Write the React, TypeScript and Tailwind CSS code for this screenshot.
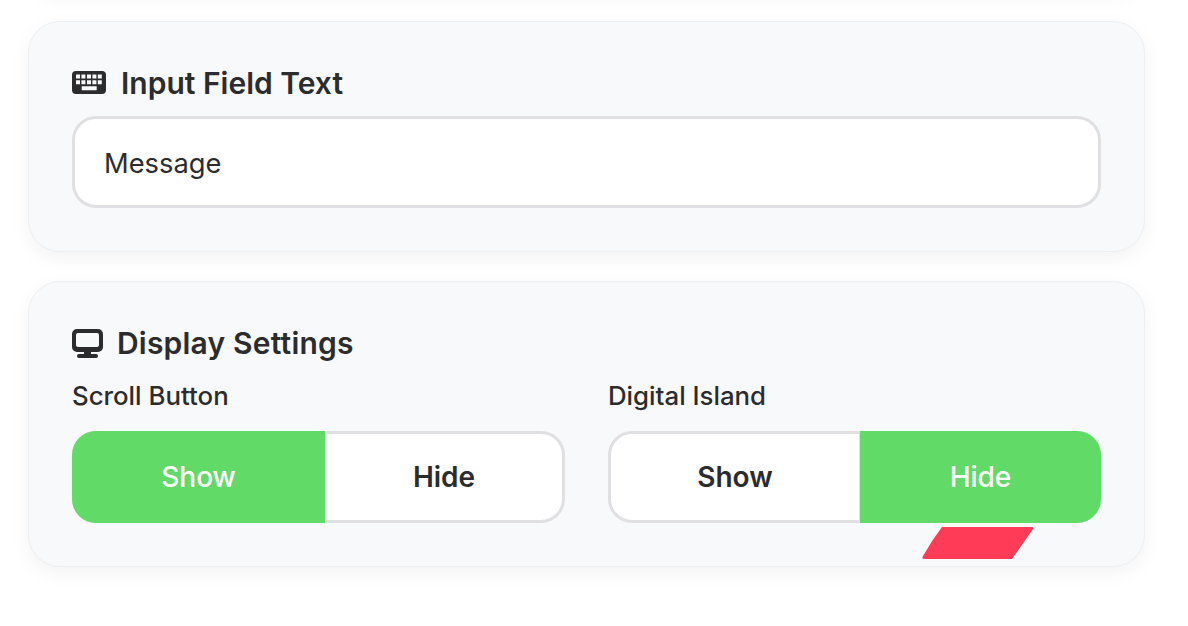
function KeyboardIcon() {
    return (
        <svg className="mr-[15px] -mt-[1px]" width="34" height="23" viewBox="0 0 34 23">
            <path
                fillRule="evenodd"
                fill="#2c2c2e"
                d="M4 0H30A4 4 0 0 1 34 4V19A4 4 0 0 1 30 23H4A4 4 0 0 1 0 19V4A4 4 0 0 1 4 0ZM4 3.5V7.5H8V3.5ZM9.4 3.5V7.5H13.4V3.5ZM15 3.5V7.5H19V3.5ZM20.4 3.5V7.5H24.4V3.5ZM25.8 3.5V7.5H29.8V3.5ZM4 9.3V13.3H8V9.3ZM9.4 9.3V13.3H13.4V9.3ZM15 9.3V13.3H19V9.3ZM20.4 9.3V13.3H24.4V9.3ZM25.8 9.3V13.3H29.8V9.3ZM9.7 15.2V19.2H24.7V15.2Z"
            />
        </svg>
    );
}

function DesktopIcon() {
    return (
        <svg className="mr-[14px]" width="31" height="29" viewBox="0 0 31 29">
            <path
                fillRule="evenodd"
                fill="#2c2c2e"
                d="M5 0H26A5 5 0 0 1 31 5V18A5 5 0 0 1 26 23H19V25H24A2 2 0 0 1 24 29H7A2 2 0 0 1 7 25H12V23H5A5 5 0 0 1 0 18V5A5 5 0 0 1 5 0ZM6 4A2 2 0 0 0 4 6V16A2 2 0 0 0 6 18H25A2 2 0 0 0 27 16V6A2 2 0 0 0 25 4Z"
            />
        </svg>
    );
}

function Segmented({ label, active, withMarker }: { label: string; active: 'Show' | 'Hide'; withMarker?: boolean }) {
    return (
        <div className="flex-1 min-w-0">
            <div className="text-[25.8px] leading-[30px] font-medium text-[#2c2c2e] mb-[20px]">{label}</div>
            <div className="relative flex h-[92px] rounded-[24px] bg-white border-[3px] border-[#e0e0e2]">
                {active === 'Show' ? (
                    <>
                        <div className="flex-none w-[254px] -ml-[3px] -my-[3px] flex items-center justify-center rounded-l-[24px] border-r border-[#d5e6d6] bg-[#62da68] text-white text-[28px] font-medium">
                            Show
                        </div>
                        <div className="flex-1 flex items-center justify-center text-[28px] font-semibold">Hide</div>
                    </>
                ) : (
                    <>
                        <div className="flex-none w-[248px] flex items-center justify-center text-[28px] font-semibold">Show</div>
                        <div className="flex-1 -mr-[3px] -my-[3px] flex items-center justify-center rounded-r-[24px] border-l border-[#d5e6d6] bg-[#62da68] text-white text-[28px] font-medium">
                            Hide
                        </div>
                    </>
                )}
                {withMarker && (
                    <svg className="absolute left-[309px] top-[92px] blur-[0.5px]" width="114" height="35" viewBox="0 0 114 35">
                        <path d="M22 1 L112 1 Q114 1 113 3 L92 33 L5 33 Q1 33 3 30 Q12 14 22 1 Z" fill="#ff3b58" />
                    </svg>
                )}
            </div>
        </div>
    );
}

export default function App() {
    return (
        <div className="w-[1188px] h-[626px] overflow-hidden bg-white px-[28px] font-['Inter',sans-serif] text-[#2c2c2e]">
            <div className="-mt-[200px] w-[1117px] h-[191px] bg-[#f8f9fb] rounded-[32px] shadow-[0_6px_20px_rgba(0,0,0,0.05)]" />

            <div className="mt-[30px] w-[1117px] h-[231px] bg-[#f8f9fb] border border-[#eeeff1] rounded-[32px] shadow-[0_6px_20px_rgba(0,0,0,0.05)] px-[43px] pt-[43px]">
                <h2 className="flex items-center h-[36px] text-[30px] font-semibold">
                    <KeyboardIcon />
                    Input Field Text
                </h2>
                <div className="mt-[15px] h-[92px] flex items-center rounded-[24px] bg-white border-[3px] border-[#e0e0e2] px-[29px] pt-[4px] text-[27.3px]">
                    Message
                </div>
            </div>

            <div className="mt-[29px] w-[1117px] h-[286px] bg-[#f8f9fb] border border-[#eeeff1] rounded-[32px] shadow-[0_6px_20px_rgba(0,0,0,0.05)] px-[43px] pt-[43px]">
                <h2 className="flex items-center h-[36px] text-[30px] font-semibold tracking-[0.2px]">
                    <DesktopIcon />
                    Display Settings
                </h2>
                <div className="mt-[20px] flex gap-[43px] w-[1029px]">
                    <Segmented label="Scroll Button" active="Show" />
                    <Segmented label="Digital Island" active="Hide" withMarker />
                </div>
            </div>
        </div>
    );
}
